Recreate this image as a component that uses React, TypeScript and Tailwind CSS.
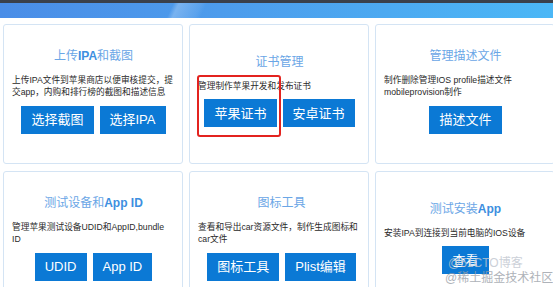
import React from "react";

type Card = {
  title: React.ReactNode;
  desc: string;
  buttons: string[];
  highlight?: boolean;
  wide?: boolean;
};

const B = ({ children }: { children: React.ReactNode }) => (
  <span className="font-bold text-[#3d8fe0]">{children}</span>
);

const cards: Card[] = [
  { title: <>上传<B>IPA</B>和截图</>, desc: "上传IPA文件到苹果商店以便审核提交，提交app，内购和排行榜的截图和描述信息", buttons: ["选择截图", "选择IPA"] },
  { title: <>证书管理</>, desc: "管理制作苹果开发和发布证书", buttons: ["苹果证书", "安卓证书"], highlight: true },
  { title: <>管理描述文件</>, desc: "制作删除管理IOS profile描述文件 mobileprovision制作", buttons: ["描述文件"] },
  { title: <>测试设备和<B>App ID</B></>, desc: "管理苹果测试设备UDID和AppID,bundle ID", buttons: ["UDID", "App ID"] },
  { title: <>图标工具</>, desc: "查看和导出car资源文件，制作生成图标和car文件", buttons: ["图标工具", "Plist编辑"], wide: true },
  { title: <>测试安装<B>App</B></>, desc: "安装IPA到连接到当前电脑的IOS设备", buttons: ["查看"] },
];

export default function App() {
  return (
    <div
      className="relative w-[553px] h-[287px] overflow-hidden bg-white"
      style={{ fontFamily: '"Liberation Sans", "Noto Sans CJK SC", sans-serif' }}
    >
      <div className="h-[3px] bg-[#3a404b]" />
      <div className="relative h-[15px] bg-[linear-gradient(90deg,#4a8de7_0%,#4d9cec_40%,#4bb7f6_100%)] overflow-hidden">
        <div className="absolute inset-0 bg-[linear-gradient(115deg,transparent_0%,transparent_31%,rgba(255,255,255,0.25)_32%,rgba(255,255,255,0.08)_36%,transparent_37%,transparent_100%)]" />
      </div>
      <div className="grid grid-cols-[180px_180px_180px] gap-x-[6px] gap-y-[7px] pl-[3px] pt-[6px]">
        {cards.map((c, i) => (
          <div
            key={i}
            className={
              "relative h-[140px] rounded-[3px] border border-[#d4e4f4] bg-white flex flex-col justify-center pb-[8px] pl-[8px] " +
              (c.wide ? "pr-[3px]" : "pr-[7px]")
            }
          >
            <div className="text-center text-[12px] leading-[18px] text-[#6aa6e6]">{c.title}</div>
            <div className="mt-[9px] text-[8.7px] leading-[12.5px] text-[#2a2a2a]">{c.desc}</div>
            <div className="mt-[7px] flex justify-center gap-[6px]">
              {c.buttons.map((b) => (
                <div
                  key={b}
                  className="h-[28px] px-[10px] flex items-center justify-center bg-[#0b79d5] text-white text-[13px] whitespace-nowrap"
                >
                  {b}
                </div>
              ))}
            </div>
            {c.highlight && (
              <div className="absolute left-[7px] top-[50px] w-[84px] h-[62px] rounded-[3px] border-2 border-[#e3231f]" />
            )}
          </div>
        ))}
      </div>
      <div className="absolute left-[448px] top-[257px] text-[12px] leading-[13px] text-[#bfc6cf] opacity-80 whitespace-nowrap">
        @51CTO博客
      </div>
      <div className="absolute left-[445px] top-[271px] text-[12px] leading-[14px] text-[#9aa0a8] opacity-80 whitespace-nowrap">
        @稀土掘金技术社区
      </div>
    </div>
  );
}
